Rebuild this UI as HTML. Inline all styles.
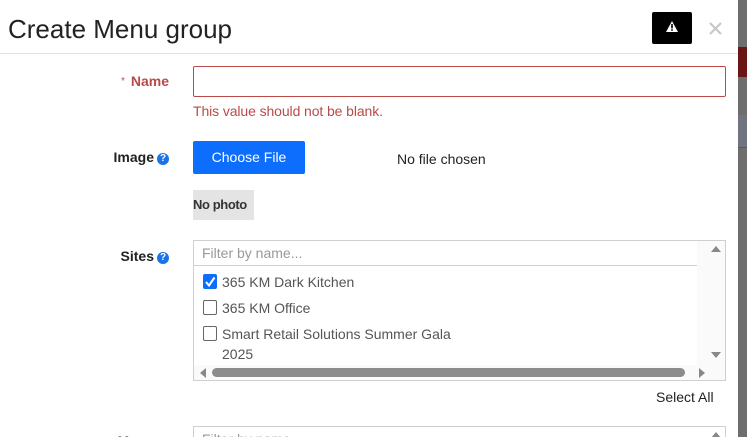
<!DOCTYPE html>
<html><head><meta charset="utf-8"><style>
*{box-sizing:border-box;margin:0;padding:0}
html,body{width:747px;height:437px;overflow:hidden}
body{background:#fff;font-family:"Liberation Sans",sans-serif;position:relative}
.bd{position:absolute;left:738px;top:0;width:9px;height:437px;background:#6e6e6e}
.abs{position:absolute}
.lbl{position:absolute;right:578px;font-weight:bold;font-size:14px;color:#222;white-space:nowrap}
.q{display:inline-block;width:12px;height:12px;border-radius:50%;background:#1a73e8;color:#fff;font-size:10px;line-height:12px;text-align:center;vertical-align:1px;margin-left:3px}
.cb{position:absolute;left:203px;width:14px;height:15px;border:1px solid #666;border-radius:2px;background:#fff}
.it{position:absolute;left:222px;font-size:14px;color:#555;white-space:nowrap}
</style></head><body>
<div class="bd"></div>
<div class="abs" style="left:738px;top:47px;width:9px;height:30px;background:#6a1616"></div>
<div class="abs" style="left:738px;top:115px;width:9px;height:32px;background:#6f7480"></div>
<div class="abs" style="left:738px;top:147px;width:9px;height:1px;background:#2a5bd0"></div>
<div class="abs" style="left:0;top:0;width:738px;height:437px;background:#fff"></div>
<div class="abs" style="left:8px;top:14px;font-size:26px;color:#222;white-space:nowrap">Create Menu group</div>
<div class="abs" style="left:652px;top:12px;width:40px;height:32px;background:#000;border-radius:2px">
<svg width="40" height="32" viewBox="0 0 40 32"><path d="M20 9 L26 20 L14 20 Z" fill="#fff"/><rect x="19.2" y="12" width="1.6" height="4.5" fill="#000"/><rect x="19.2" y="17.3" width="1.6" height="1.5" fill="#000"/></svg></div>
<svg class="abs" style="left:708px;top:21px" width="15" height="15"><path d="M2 2 L13 13 M13 2 L2 13" stroke="#c8c8c8" stroke-width="2.2"/></svg>
<div class="abs" style="left:0;top:53px;width:738px;height:1px;background:#e2e2e2"></div>

<div class="lbl" style="top:73px;color:#b94a48"><span style="font-size:10px;font-weight:normal;margin-right:6px;vertical-align:2px">*</span>Name</div>
<div class="abs" style="left:193px;top:66px;width:533px;height:31px;border:1px solid #b94a48;border-radius:2px"></div>
<div class="abs" style="left:193px;top:103px;font-size:14px;color:#b94a48;letter-spacing:-0.1px;white-space:nowrap">This value should not be blank.</div>

<div class="lbl" style="top:149px">Image<span class="q">?</span></div>
<div class="abs" style="left:193px;top:141px;width:112px;height:33px;background:#0d6efd;border-radius:2px;color:#fff;font-size:14px;line-height:33px;text-align:center">Choose File</div>
<div class="abs" style="left:397px;top:151px;font-size:14px;color:#222;white-space:nowrap">No file chosen</div>
<div class="abs" style="left:193px;top:190px;width:61px;height:30px;background:#e4e4e4;font-size:13px;font-weight:bold;color:#333;line-height:30px;white-space:nowrap;letter-spacing:-0.4px;overflow:hidden">No photo</div>

<div class="lbl" style="top:248px">Sites<span class="q">?</span></div>
<div class="abs" style="left:193px;top:240px;width:533px;height:141px;border:1px solid #cfcfcf;background:#fff"></div>
<div class="abs" style="left:194px;top:241px;width:503px;height:25px;border-bottom:1px solid #d0d0d0;font-size:14px;color:#999;padding:4px 0 0 8px">Filter by name...</div>
<div class="abs" style="left:697px;top:241px;width:28px;height:125px;background:#fafafa"></div>
<svg class="abs" style="left:710px;top:244px" width="12" height="10"><path d="M1 8 L6 2 L11 8 Z" fill="#888"/></svg>
<svg class="abs" style="left:710px;top:350px" width="12" height="10"><path d="M1 2 L6 8 L11 2 Z" fill="#888"/></svg>
<div class="abs" style="left:194px;top:365px;width:531px;height:15px;background:#fafafa"></div>
<svg class="abs" style="left:198px;top:367px" width="10" height="12"><path d="M8 1 L2 6 L8 11 Z" fill="#888"/></svg>
<div class="abs" style="left:212px;top:368px;width:473px;height:9px;background:#8c8c8c;border-radius:5px"></div>
<svg class="abs" style="left:697px;top:367px" width="10" height="12"><path d="M2 1 L8 6 L2 11 Z" fill="#888"/></svg>
<div class="cb" style="top:274px;background:#0d6efd;border-color:#0d6efd"><svg width="14" height="15" style="position:absolute;left:-1px;top:-1px"><path d="M3 8 L6 11.5 L11.5 3.5" stroke="#fff" stroke-width="2" fill="none"/></svg></div>
<div class="it" style="top:274px">365 KM Dark Kitchen</div>
<div class="cb" style="top:300px"></div>
<div class="it" style="top:300px">365 KM Office</div>
<div class="cb" style="top:326px"></div>
<div class="it" style="top:326px">Smart Retail Solutions Summer Gala</div>
<div class="it" style="top:346px">2025</div>
<div class="abs" style="left:656px;top:389px;font-size:14px;color:#222">Select All</div>

<div class="lbl" style="top:433px">Menu<span class="q">?</span></div>
<div class="abs" style="left:193px;top:426px;width:533px;height:30px;border:1px solid #cfcfcf"></div>
<div class="abs" style="left:202px;top:431px;font-size:14px;color:#999">Filter by name...</div>
<svg class="abs" style="left:710px;top:430px" width="12" height="10"><path d="M1 8 L6 2 L11 8 Z" fill="#888"/></svg>
</body></html>
